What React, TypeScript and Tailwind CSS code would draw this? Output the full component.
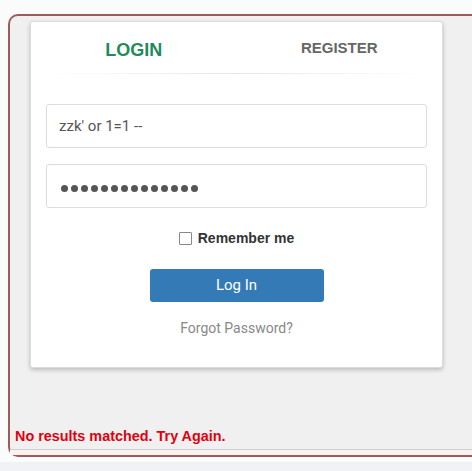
import React from "react";

const sans = "font-['Roboto','Liberation_Sans',sans-serif]";
const arial = "font-['Liberation_Sans',Arial,sans-serif]";

export default function App() {
  return (
    <div className="w-[472px] h-[471px] overflow-hidden bg-[#f0f2f5]">
      <div className="bg-[#f9fcfb] pt-[14px] pl-[8px] pb-[5px]">
        {/* Outer panel */}
        <div className="h-[443px] border-2 border-r-0 border-[#9d5c5c] rounded-l-[10px] bg-[#f0f0f0] flex flex-col">
          <div className="pl-[20px] pt-[5px]">
            {/* Card */}
            <div className="w-[413px] h-[347px] bg-white border border-[#dcdcdc] rounded-[3px] shadow-[0_2px_4px_rgba(0,0,0,0.22)]">
              <div className="flex h-[51px]">
                <div className={`w-1/2 flex items-center justify-center pt-[6px] text-[18px] font-bold text-[#1f8a5c] ${arial}`}>
                  LOGIN
                </div>
                <div className={`w-1/2 flex items-center justify-center pt-[1px] text-[15px] font-bold text-[#666666] ${arial}`}>
                  REGISTER
                </div>
              </div>
              <div className="mx-[17px] h-px bg-gradient-to-r from-transparent via-[#e6e6e6] to-transparent" />

              <div className="px-[15px] pt-[30px] flex flex-col gap-[16px]">
                <input
                  readOnly
                  value="zzk' or 1=1 --"
                  className={`h-[44px] w-full border border-[#dddddd] rounded-[3px] px-[12px] text-[15px] text-[#555555] outline-none ${sans}`}
                />
                <div className="h-[44px] w-full border border-[#dddddd] rounded-[3px] px-[14px] flex items-center pt-[5px] gap-[3px]">
                  {Array.from({ length: 14 }).map((_, i) => (
                    <span key={i} className="w-[7px] h-[7px] rounded-full bg-[#555555]" />
                  ))}
                </div>
              </div>

              <div className="flex items-center justify-center mt-[23px] h-[14px]">
                <span className="w-[13px] h-[13px] border border-[#888888] bg-white rounded-[1px] mr-[6px]" />
                <span className={`text-[14px] font-bold text-[#333333] ${arial}`}>Remember me</span>
              </div>

              <div className="flex justify-center mt-[24px]">
                <button className={`w-[174px] h-[33px] bg-[#337ab7] text-white rounded-[3px] text-[15px] ${sans}`}>
                  Log In
                </button>
              </div>

              <div className={`text-center mt-[16px] text-[14px] text-[#888888] ${sans}`}>Forgot Password?</div>
            </div>
          </div>

          <div className="mt-auto">
            <div className={`pl-[5px] pb-[1px] text-[14.4px] font-bold text-[#e0000f] ${arial}`}>
              No results matched. Try Again.
            </div>
            <div className="h-px bg-[#c8d0da]" />
            <div className="h-[5px] bg-[#fcf1ef]" />
          </div>
        </div>
      </div>
    </div>
  );
}
